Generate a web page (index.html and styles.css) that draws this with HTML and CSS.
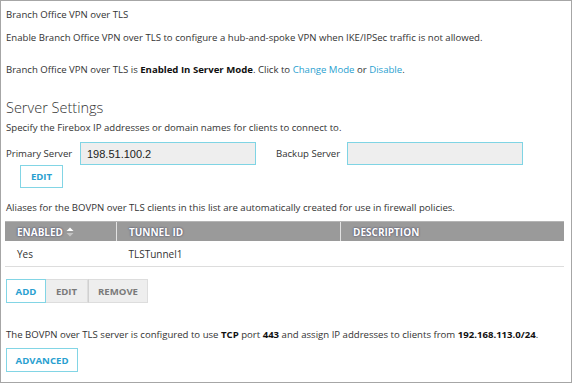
FILE: index.html
```html
<!DOCTYPE html>
<html lang="en">
<head>
    <meta charset="UTF-8">
    <title>Branch Office VPN over TLS</title>
    <link rel="stylesheet" href="styles.css">
</head>
<body>
    <div class="page">
        <p class="intro-title">Branch Office VPN over TLS</p>
        <p class="intro-desc">Enable Branch Office VPN over TLS to configure a hub-and-spoke VPN when IKE/IPSec traffic is not allowed.</p>
        <p class="mode">Branch Office VPN over TLS is <b>Enabled In Server Mode</b>. Click to <a href="#">Change Mode</a> or <a href="#">Disable</a>.</p>

        <h2>Server Settings</h2>
        <p class="hint">Specify the Firebox IP addresses or domain names for clients to connect to.</p>
        <div class="server-row">
            <label class="primary-label">Primary Server</label>
            <input class="field" type="text" value="198.51.100.2" readonly>
            <label class="backup-label">Backup Server</label>
            <input class="field" type="text" value="" readonly>
        </div>
        <button class="btn btn-primary btn-edit">EDIT</button>

        <p class="aliases">Aliases for the BOVPN over TLS clients in this list are automatically created for use in firewall policies.</p>
        <table class="clients">
            <thead>
                <tr>
                    <th class="col-enabled">ENABLED
                        <svg class="sort" width="8" height="10" viewBox="0 0 8 10">
                            <path d="M0.5 4 L4 0.5 L7.5 4 Z" fill="#fff"/>
                            <path d="M0.5 6 L4 9.5 L7.5 6 Z" fill="#c4c4c4"/>
                        </svg>
                    </th>
                    <th class="col-tunnel">TUNNEL ID</th>
                    <th>DESCRIPTION</th>
                </tr>
            </thead>
            <tbody>
                <tr>
                    <td>Yes</td>
                    <td>TLSTunnel1</td>
                    <td></td>
                </tr>
            </tbody>
        </table>
        <div class="btn-group">
            <button class="btn btn-primary">ADD</button>
            <button class="btn btn-disabled">EDIT</button>
            <button class="btn btn-disabled">REMOVE</button>
        </div>

        <p class="summary">The BOVPN over TLS server is configured to use <b>TCP</b> port <b>443</b> and assign IP addresses to clients from <b>192.168.113.0/24</b>.</p>
        <button class="btn btn-primary btn-advanced">ADVANCED</button>
    </div>
</body>
</html>
```

FILE: styles.css
```css
body {
    margin: 0;
    font-family: 'Open Sans', sans-serif;
    font-size: 9.6px;
    color: #333;
}

.page {
    box-sizing: border-box;
    width: 572px;
    height: 383px;
    border: 1px solid #a6a6a6;
    padding: 7px 7px 0 4px;
}

p {
    margin: 0;
    line-height: 14px;
    padding-left: 1px;
}

b {
    color: #111;
    font-weight: 700;
}

a {
    color: #2a9fd0;
    text-decoration: none;
}

.intro-desc {
    margin-top: 9px;
}

.mode {
    margin-top: 18px;
}

h2 {
    margin: 21px 0 0;
    padding-left: 1px;
    font-size: 14.5px;
    font-weight: 300;
    line-height: 20px;
    color: #333;
}

.hint {
    margin-top: 3px;
}

.server-row {
    display: flex;
    align-items: center;
    margin-top: 7px;
    padding-left: 1px;
}

.primary-label {
    width: 74px;
}

.backup-label {
    margin-left: 20px;
    width: 71px;
}

.field {
    box-sizing: border-box;
    width: 176px;
    height: 23px;
    margin: 0;
    padding: 0 6px;
    background: #eee;
    border: 1px solid #7fd4e4;
    font-family: 'Liberation Sans', sans-serif;
    font-size: 11px;
    color: #222;
    outline: none;
}

.btn {
    box-sizing: border-box;
    height: 24px;
    margin: 0;
    padding: 0 10px;
    font-family: 'Open Sans', sans-serif;
    font-size: 9.6px;
    font-weight: 700;
    border-radius: 0;
    cursor: pointer;
}

.btn-primary {
    background: #fff;
    border: 1px solid #82d5e5;
    color: #2a9fd0;
}

.btn-disabled {
    background: #eee;
    border: 1px solid #ddd;
    color: #7a7a7a;
}

.btn-edit {
    display: block;
    width: 43px;
    height: 23px;
    margin: 0 0 0 15px;
    padding: 0;
}

.aliases {
    margin-top: 13px;
}

.clients {
    width: 559px;
    margin-top: 6px;
    border-collapse: collapse;
}

.clients th {
    height: 19px;
    padding: 0 12px;
    background: #9a9a9a;
    border-top: 1px solid #b4b4b4;
    border-left: 1px solid #e2e2e2;
    color: #fff;
    font-size: 10px;
    font-weight: 700;
    text-align: left;
    text-shadow: 0 0 2px #2c2c55;
}

.clients th:first-child {
    border-left: none;
}

.col-enabled {
    width: 87px;
}

.col-tunnel {
    width: 199px;
}

.sort {
    vertical-align: -1px;
}

.clients td {
    height: 25px;
    padding: 0 12px;
    border-bottom: 1px solid #ddd;
    font-size: 10px;
    color: #333;
}

.btn-group {
    display: flex;
    margin-top: 12px;
    padding-left: 1px;
}

.btn-group .btn {
    padding: 0;
}

.btn-group .btn:nth-child(1) {
    width: 40px;
}

.btn-group .btn:nth-child(2) {
    width: 42px;
    border-left: none;
}

.btn-group .btn:nth-child(3) {
    width: 60px;
    border-left: 1px solid #d0d0d0;
}

.summary {
    margin-top: 25px;
}

.btn-advanced {
    display: block;
    width: 72px;
    margin: 6px 0 0 1px;
    padding: 0;
}
```
